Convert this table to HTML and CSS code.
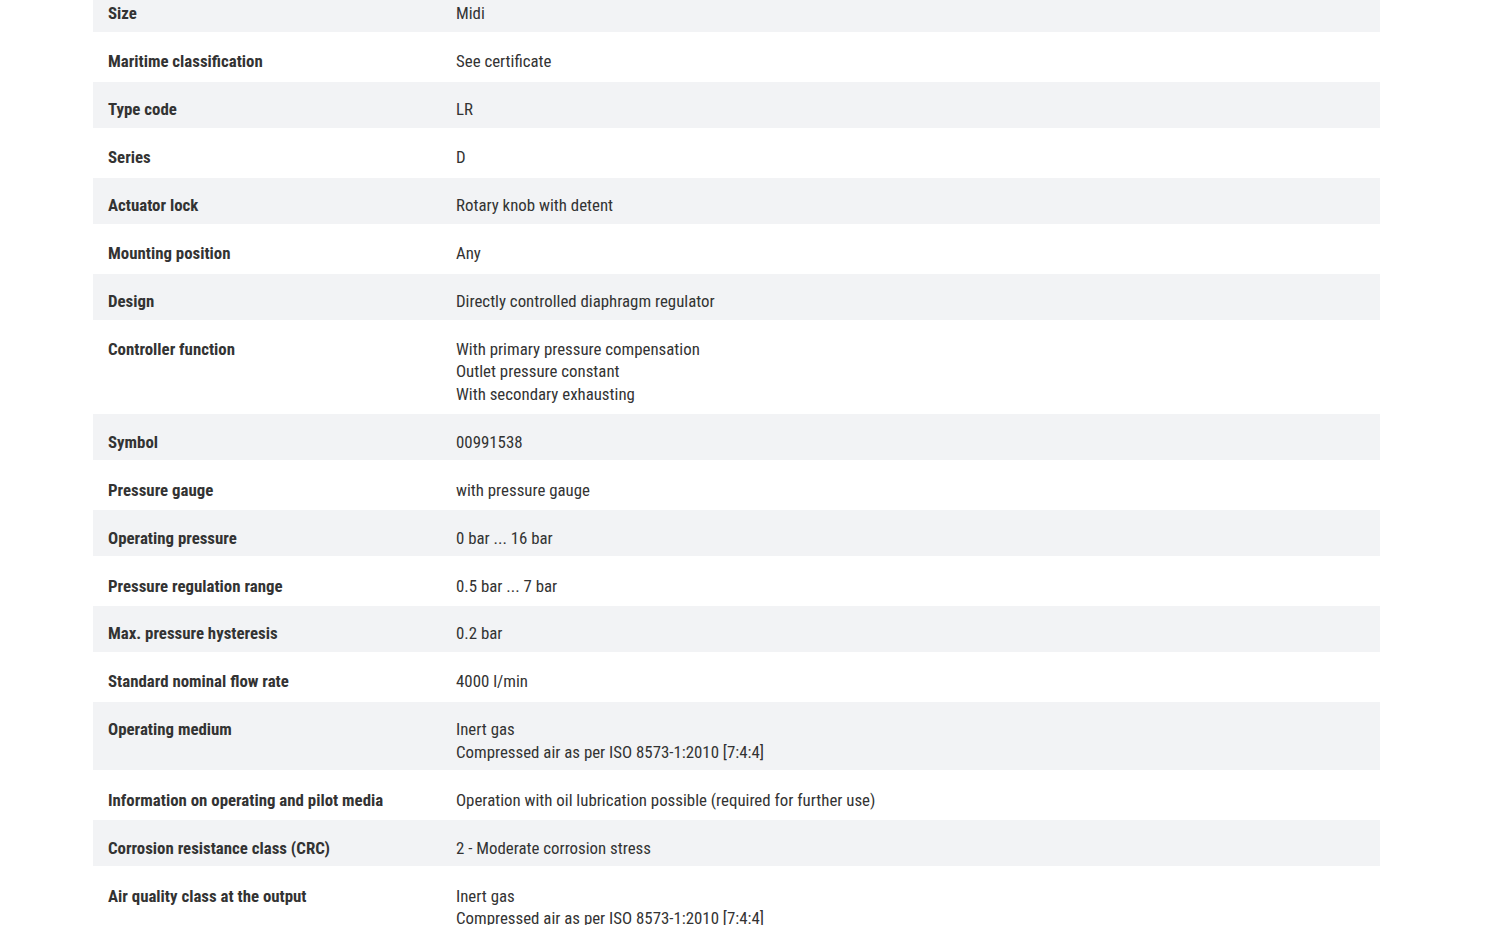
FILE: index.html
```
<!DOCTYPE html>
<html lang="en">
<head>
<meta charset="utf-8">
<title>Technical data</title>
<link rel="stylesheet" href="styles.css">
</head>
<body>
<div class="specs">
  <div class="row"><div class="label">Size</div><div class="value">Midi</div></div>
  <div class="row"><div class="label">Maritime classification</div><div class="value">See certificate</div></div>
  <div class="row"><div class="label">Type code</div><div class="value">LR</div></div>
  <div class="row"><div class="label">Series</div><div class="value">D</div></div>
  <div class="row"><div class="label">Actuator lock</div><div class="value">Rotary knob with detent</div></div>
  <div class="row"><div class="label">Mounting position</div><div class="value">Any</div></div>
  <div class="row"><div class="label">Design</div><div class="value">Directly controlled diaphragm regulator</div></div>
  <div class="row"><div class="label">Controller function</div><div class="value"><div>With primary pressure compensation</div><div>Outlet pressure constant</div><div>With secondary exhausting</div></div></div>
  <div class="row"><div class="label">Symbol</div><div class="value">00991538</div></div>
  <div class="row"><div class="label">Pressure gauge</div><div class="value">with pressure gauge</div></div>
  <div class="row"><div class="label">Operating pressure</div><div class="value">0 bar ... 16 bar</div></div>
  <div class="row"><div class="label">Pressure regulation range</div><div class="value">0.5 bar ... 7 bar</div></div>
  <div class="row"><div class="label">Max. pressure hysteresis</div><div class="value">0.2 bar</div></div>
  <div class="row"><div class="label">Standard nominal flow rate</div><div class="value">4000 l/min</div></div>
  <div class="row"><div class="label">Operating medium</div><div class="value"><div>Inert gas</div><div>Compressed air as per ISO 8573-1:2010 [7:4:4]</div></div></div>
  <div class="row"><div class="label">Information on operating and pilot media</div><div class="value">Operation with oil lubrication possible (required for further use)</div></div>
  <div class="row"><div class="label">Corrosion resistance class (CRC)</div><div class="value">2 - Moderate corrosion stress</div></div>
  <div class="row"><div class="label">Air quality class at the output</div><div class="value"><div>Inert gas</div><div>Compressed air as per ISO 8573-1:2010 [7:4:4]</div></div></div>
</div>
</body>
</html>
```
FILE: styles.css
```
html, body {
  margin: 0;
  padding: 0;
  background: #ffffff;
}
body {
  font-family: "Roboto Condensed", "Liberation Sans", sans-serif;
  font-size: 16.85px;
  line-height: 22.45px;
  color: #333333;
}
.specs {
  width: 1287px;
  margin: -14px 0 0 93px;
  display: flex;
  flex-direction: column;
}
.row {
  display: grid;
  grid-template-columns: 348px 1fr;
  padding: 16.3px 15px 7.2px;
  border-bottom: 2px solid #ffffff;
}
.row:nth-child(odd) {
  background: #f2f3f5;
}
.label {
  font-weight: 700;
  color: #333333;
}
.value {
  font-weight: 400;
}
```
